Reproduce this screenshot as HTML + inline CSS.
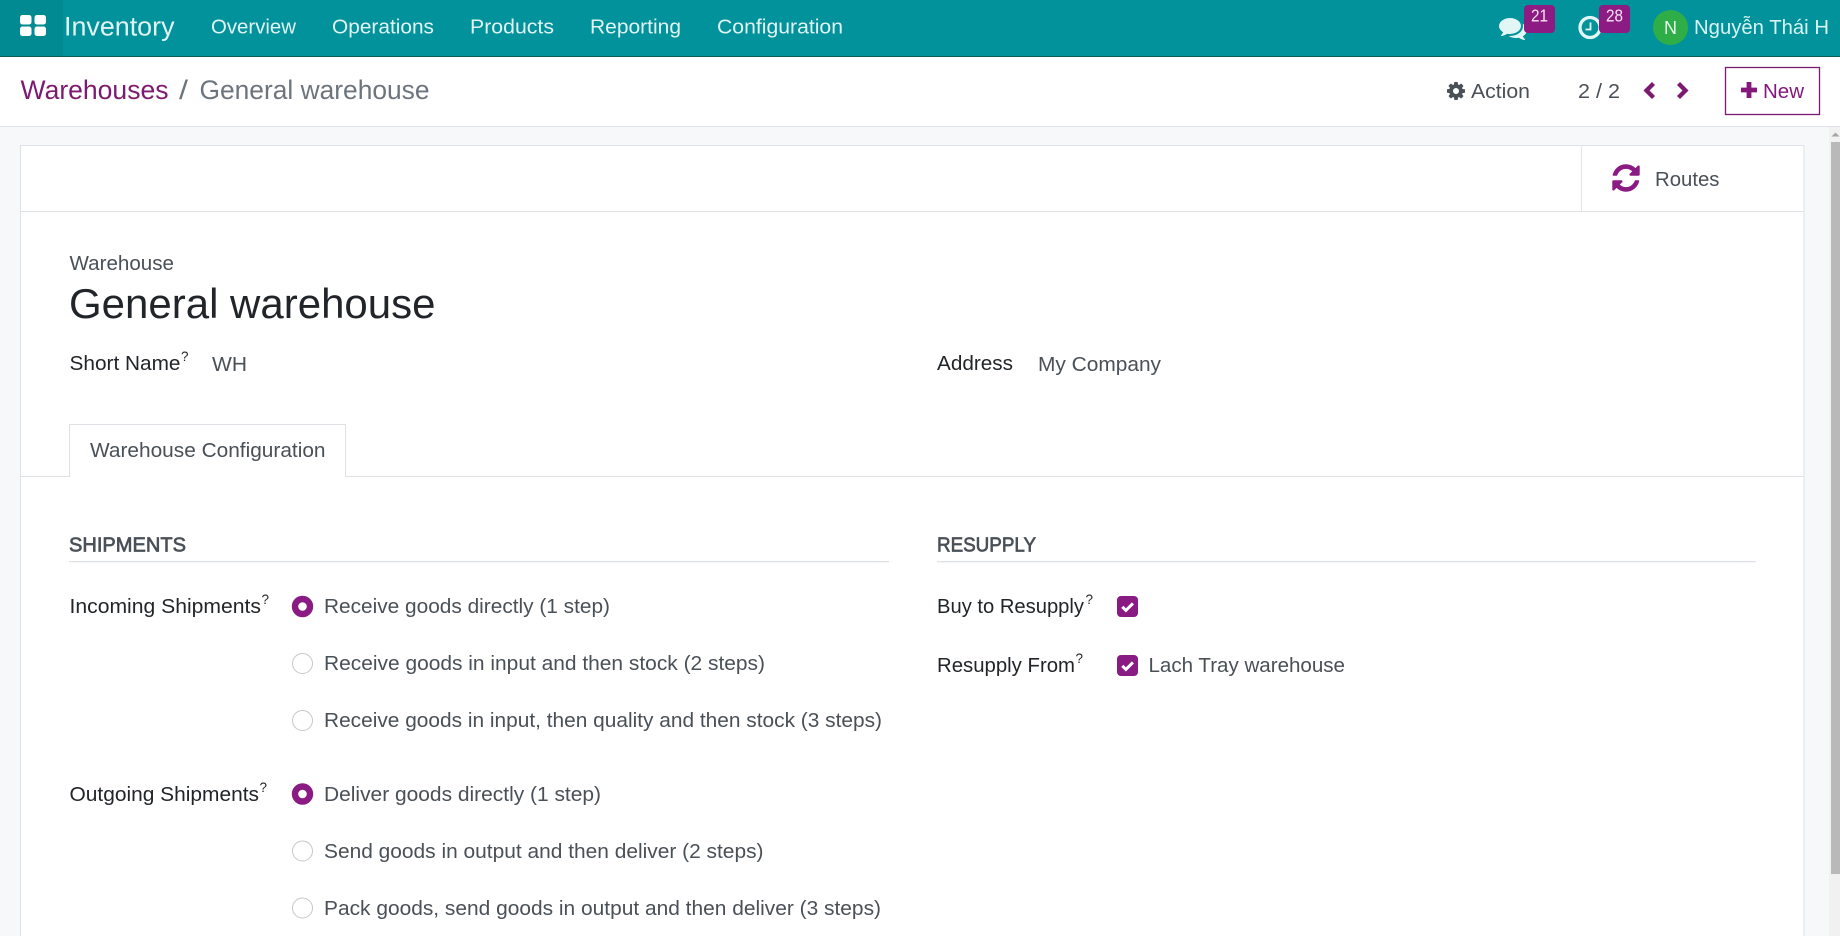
<!DOCTYPE html>
<html lang="en"><head><meta charset="utf-8"><title>General warehouse - Inventory</title>
<style>
html,body{margin:0;padding:0;width:1840px;height:936px;overflow:hidden;background:#f7f8fa}
svg{display:block}
text{font-family:"Liberation Sans","Noto Sans CJK JP",sans-serif;font-size:20.6px;fill:#495057}
.n{fill:#e2f3f3}
.l{fill:#212529}
.q{font-size:14px;fill:#212529}
.h{fill:#495057;stroke:#495057;stroke-width:.7px}
</style></head><body>
<svg xmlns="http://www.w3.org/2000/svg" width="1840" height="936" viewBox="0 0 1840 936">
<defs>
<path id="refresh" d="M1639 1056q0 5-1 7-64 268-268 434.500t-478 166.500q-146 0-282.500-55t-243.500-157l-129 129q-19 19-45 19t-45-19-19-45v-448q0-26 19-45t45-19h448q26 0 45 19t19 45-19 45l-137 137q71 66 161 102t187 36q134 0 250-65t186-179q11-17 53-117 8-23 30-23h192q13 0 22.500 9.500t9.500 22.500zm25-800v448q0 26-19 45t-45 19h-448q-26 0-45-19t-19-45 19-45l138-138q-148-137-349-137-134 0-250 65t-186 179q-11 17-53 117-8 23-30 23h-199q-13 0-22.500-9.500t-9.500-22.500v-7q65-268 270-434.500t480-166.500q146 0 284 55.500t245 156.500l130-129q19-19 45-19t45 19 19 45z"/>
</defs>
<!-- page bg -->
<rect width="1840" height="936" fill="#f7f8fa"/>
<!-- navbar -->
<rect width="1840" height="56" fill="#01929b"/>
<rect y="56" width="1840" height="1" fill="#0d5c60"/>
<rect width="63" height="56" fill="#018a92"/>
<g fill="#fff">
<rect x="20" y="15" width="11.500" height="9.500" rx="2.500"/><rect x="34.500" y="15" width="11.500" height="9.500" rx="2.500"/>
<rect x="20" y="26.500" width="11.500" height="9.500" rx="2.500"/><rect x="34.500" y="26.500" width="11.500" height="9.500" rx="2.500"/>
</g>
<text class="n" x="64" y="35.500" style="font-size:27px" textLength="110.500" lengthAdjust="spacingAndGlyphs">Inventory</text>
<text class="n" x="211" y="33.500" textLength="85" lengthAdjust="spacingAndGlyphs">Overview</text>
<text class="n" x="332" y="33.500" textLength="102" lengthAdjust="spacingAndGlyphs">Operations</text>
<text class="n" x="470" y="33.500" textLength="84" lengthAdjust="spacingAndGlyphs">Products</text>
<text class="n" x="590" y="33.500" textLength="91" lengthAdjust="spacingAndGlyphs">Reporting</text>
<text class="n" x="717" y="33.500" textLength="126" lengthAdjust="spacingAndGlyphs">Configuration</text>
<!-- chat icon -->
<svg x="1499" y="14" width="28" height="28" viewBox="0 0 1792 1792"><path fill="#e2f6f5" d="M1408 768q0 139-94 257t-256.500 186.500-353.500 68.500q-86 0-176-16-124 88-278 128-36 9-86 16h-3q-11 0-20.500-8t-11.500-21q-1-3-1-6.500t.5-6.500 2-6l2.500-5 3.500-5.500 4-5 4.500-5 4-4.500q5-6 23-25t26-29.500 22.500-29 25-38.500 20.500-44q-124-72-195-177t-71-224q0-139 94-257t256.500-186.500 353.500-68.500 353.500 68.500 256.500 186.500 94 257zm384 256q0 120-71 224.500t-195 176.500q10 24 20.500 44t25 38.500 22.500 29 26 29.500 23 25q1 1 4 4.500t4.500 5 4 5 3.500 5.500l2.500 5 2 6 .5 6.500-1 6.500q-3 14-13 22t-22 7q-50-7-86-16-154-40-278-128-90 16-176 16-271 0-472-132 58 4 88 4 161 0 309-45t264-129q125-92 192-212t67-254q0-77-23-152 129 71 204 178t75 230z"/></svg>
<rect x="1524" y="5" width="31" height="28" rx="4" fill="#8c1c84"/>
<text x="1531" y="21.500" style="font-size:17.500px;fill:#f6e6f3" textLength="17" lengthAdjust="spacingAndGlyphs">21</text>
<!-- clock -->
<circle cx="1590" cy="27.500" r="10" fill="none" stroke="#e2f6f5" stroke-width="3.300"/>
<path d="M1590.500 22.500v7h-5" fill="none" stroke="#e2f6f5" stroke-width="1.800"/>
<rect x="1599" y="5" width="31" height="28" rx="4" fill="#8c1c84"/>
<text x="1606" y="21.500" style="font-size:17.500px;fill:#f6e6f3" textLength="17" lengthAdjust="spacingAndGlyphs">28</text>
<!-- avatar -->
<circle cx="1670.500" cy="27.500" r="17.500" fill="#2fae48"/>
<text x="1664" y="34" style="font-size:18px;fill:#e8f8ea" textLength="13" lengthAdjust="spacingAndGlyphs">N</text>
<text x="1694" y="34" style="fill:#d8f3f2" textLength="135" lengthAdjust="spacingAndGlyphs">Nguyễn Thái H</text>

<!-- control panel -->
<rect y="57" width="1840" height="69" fill="#fff"/>
<rect y="126" width="1840" height="1" fill="#dfe3e8"/>
<text x="20.500" y="99" style="font-size:27px;fill:#7c1a72" textLength="148" lengthAdjust="spacingAndGlyphs">Warehouses</text>
<text x="179" y="99" style="font-size:27px;fill:#6c757d" textLength="9" lengthAdjust="spacingAndGlyphs">/</text>
<text x="199.500" y="99" style="font-size:27px;fill:#6c757d" textLength="230" lengthAdjust="spacingAndGlyphs">General warehouse</text>
<svg x="1445.500" y="80.500" width="21" height="21" viewBox="0 0 1792 1792"><path fill="#495057" d="M1152 896q0-106-75-181t-181-75-181 75-75 181 75 181 181 75 181-75 75-181zm512-109v222q0 12-8 23t-20 13l-185 28q-19 54-39 91 35 50 107 138 10 12 10 25t-9 23q-27 37-99 108t-94 71q-12 0-26-9l-138-108q-44 23-91 38-16 136-29 186-7 28-36 28h-222q-14 0-24.500-8.500t-11.500-21.500l-28-184q-49-16-90-37l-141 107q-10 9-25 9-14 0-25-11-126-114-165-168-7-10-7-23 0-12 8-23 15-21 51-66.500t54-70.500q-27-50-41-99l-183-27q-13-2-21-12.500t-8-23.500v-222q0-12 8-23t19-13l186-28q14-46 39-92-40-57-107-138-10-12-10-24 0-10 9-23 26-36 98.500-107.500t94.500-71.500q13 0 26 10l138 107q44-23 91-38 16-136 29-186 7-28 36-28h222q14 0 24.500 8.500t11.500 21.500l28 184q49 16 90 37l142-107q9-9 24-9 13 0 25 10 129 119 165 170 7 8 7 22 0 12-8 23-15 21-51 66.500t-54 70.500q26 50 41 98l183 28q13 2 21 12.500t8 23.500z"/></svg>
<text x="1471" y="98" textLength="59" lengthAdjust="spacingAndGlyphs">Action</text>
<text x="1578" y="98" textLength="42" lengthAdjust="spacingAndGlyphs">2 / 2</text>
<polyline points="1653.500,83.500 1646.500,90.500 1653.500,97.500" fill="none" stroke="#7c1a72" stroke-width="4.300"/>
<polyline points="1678.500,83.500 1685.500,90.500 1678.500,97.500" fill="none" stroke="#7c1a72" stroke-width="4.300"/>
<rect x="1725.500" y="67.500" width="94" height="47" fill="#fff" stroke="#7c1a72" stroke-width="1.300"/>
<path d="M1741 90h16M1749 82v16" stroke="#86187c" stroke-width="4.800" fill="none"/>
<text x="1763" y="98" style="fill:#86187c" textLength="41" lengthAdjust="spacingAndGlyphs">New</text>

<!-- card -->
<rect x="20.500" y="145.500" width="1783.500" height="800" fill="#fff" stroke="#dee2e6" stroke-width="1"/>
<rect x="21" y="211" width="1783" height="1" fill="#dee2e6"/>
<rect x="1581" y="146" width="1" height="65" fill="#e3e6ea"/>
<svg x="1610" y="162" width="32" height="32" viewBox="0 0 1792 1792"><use href="#refresh" fill="#8a1b82"/></svg>
<text x="1655" y="186" textLength="64.500" lengthAdjust="spacingAndGlyphs">Routes</text>

<text x="69.500" y="270" textLength="104.500" lengthAdjust="spacingAndGlyphs">Warehouse</text>
<text x="69" y="318" style="font-size:41.500px;fill:#212529" textLength="366.500" lengthAdjust="spacingAndGlyphs">General warehouse</text>
<text class="l" x="69.500" y="370" textLength="111" lengthAdjust="spacingAndGlyphs">Short Name</text>
<text class="q" x="181" y="361" textLength="7.500" lengthAdjust="spacingAndGlyphs">?</text>
<text x="212" y="371" style="font-size:20px" textLength="35" lengthAdjust="spacingAndGlyphs">WH</text>
<text class="l" x="937" y="370" textLength="76" lengthAdjust="spacingAndGlyphs">Address</text>
<text x="1038" y="371" style="font-size:20px" textLength="123" lengthAdjust="spacingAndGlyphs">My Company</text>

<!-- tab -->
<rect x="21" y="476" width="1783" height="1" fill="#dee2e6"/>
<path d="M69.500 477V424.500H345.500V477" fill="#fff" stroke="#dee2e6" stroke-width="1"/>
<rect x="70" y="476" width="275" height="1.500" fill="#fff"/>
<text x="90" y="457" textLength="235.500" lengthAdjust="spacingAndGlyphs">Warehouse Configuration</text>

<!-- shipments -->
<text class="h" x="69" y="551.500" textLength="117" lengthAdjust="spacingAndGlyphs">SHIPMENTS</text>
<rect x="69" y="561" width="820" height="1.300" fill="#dee2e6"/>
<text class="h" x="937" y="551.500" textLength="99" lengthAdjust="spacingAndGlyphs">RESUPPLY</text>
<rect x="937" y="561" width="819" height="1.300" fill="#dee2e6"/>

<text class="l" x="69.500" y="613" textLength="191.500" lengthAdjust="spacingAndGlyphs">Incoming Shipments</text>
<text class="q" x="261.500" y="604" textLength="7.500" lengthAdjust="spacingAndGlyphs">?</text>
<text class="l" x="69.500" y="801" textLength="189.500" lengthAdjust="spacingAndGlyphs">Outgoing Shipments</text>
<text class="q" x="259.500" y="792" textLength="7.500" lengthAdjust="spacingAndGlyphs">?</text>

<g fill="#fff" stroke="#c4c7cb" stroke-width="1">
<circle cx="302.500" cy="663.500" r="10"/><circle cx="302.500" cy="720.500" r="10"/>
<circle cx="302.500" cy="851" r="10"/><circle cx="302.500" cy="908" r="10"/>
</g>
<g fill="none" stroke="#8a1b82" stroke-width="6.400">
<circle cx="302.500" cy="606.500" r="7.500"/><circle cx="302.500" cy="794" r="7.500"/>
</g>

<text x="324" y="613" textLength="286" lengthAdjust="spacingAndGlyphs">Receive goods directly (1 step)</text>
<text x="324" y="670" textLength="441" lengthAdjust="spacingAndGlyphs">Receive goods in input and then stock (2 steps)</text>
<text x="324" y="727" textLength="558" lengthAdjust="spacingAndGlyphs">Receive goods in input, then quality and then stock (3 steps)</text>
<text x="324" y="801" textLength="277" lengthAdjust="spacingAndGlyphs">Deliver goods directly (1 step)</text>
<text x="324" y="858" textLength="439.500" lengthAdjust="spacingAndGlyphs">Send goods in output and then deliver (2 steps)</text>
<text x="324" y="915" textLength="557" lengthAdjust="spacingAndGlyphs">Pack goods, send goods in output and then deliver (3 steps)</text>

<!-- resupply -->
<text class="l" x="937" y="613" textLength="147" lengthAdjust="spacingAndGlyphs">Buy to Resupply</text>
<text class="q" x="1085.500" y="604" textLength="7.500" lengthAdjust="spacingAndGlyphs">?</text>
<text class="l" x="937" y="672" textLength="138" lengthAdjust="spacingAndGlyphs">Resupply From</text>
<text class="q" x="1075.500" y="663" textLength="7.500" lengthAdjust="spacingAndGlyphs">?</text>
<rect x="1117" y="596" width="21" height="21" rx="4" fill="#8a1b82"/>
<path d="M1122.300 606.800l3.600 3.600 7-7" fill="none" stroke="#fff" stroke-width="3"/>
<rect x="1117" y="655" width="21" height="21" rx="4" fill="#8a1b82"/>
<path d="M1122.300 665.800l3.600 3.600 7-7" fill="none" stroke="#fff" stroke-width="3"/>
<text x="1148.500" y="672" textLength="196.500" lengthAdjust="spacingAndGlyphs">Lach Tray warehouse</text>

<!-- scrollbar -->
<rect x="1829" y="127" width="11" height="809" fill="#f1f1f1"/>
<rect x="1831" y="142" width="9" height="732" fill="#b9b9b9"/>
<path d="M1835.500 132.500l4 4h-8z" fill="#a5a5a5"/>
</svg>
</body></html>
